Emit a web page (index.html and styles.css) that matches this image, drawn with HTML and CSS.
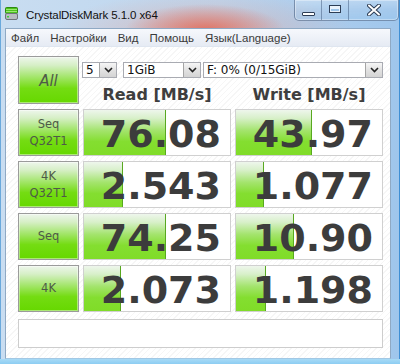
FILE: index.html
```html
<!DOCTYPE html>
<html>
<head>
<meta charset="utf-8">
<link rel="stylesheet" href="styles.css">
</head>
<body>
<div class="window">
  <div class="titlebar">
    <svg class="app-icon" width="13" height="13" viewBox="0 0 13 13">
      <rect x="0.5" y="0.5" width="12" height="6" rx="1" fill="#4cc21c" stroke="#2e8a10"/>
      <rect x="1" y="2" width="11" height="1" fill="#9ae870"/>
      <rect x="1" y="4" width="11" height="1" fill="#9ae870"/>
      <rect x="0.5" y="6.5" width="12" height="6" rx="1.5" fill="#b8bcc0" stroke="#6e7378"/>
      <rect x="2" y="9" width="2" height="1.5" fill="#3fd03a"/>
    </svg>
    <span class="title">CrystalDiskMark 5.1.0 x64</span>
    <div class="caption-btns">
      <div class="cbtn"><span class="min-glyph"></span></div>
      <div class="cbtn"><span class="max-glyph"></span></div>
      <div class="cbtn close">
        <svg width="14" height="12" viewBox="0 0 14 12">
          <path d="M2 1.5 L12 10.5 M12 1.5 L2 10.5" stroke="#2d3d55" stroke-width="4" stroke-linecap="round"/>
          <path d="M2 1.5 L12 10.5 M12 1.5 L2 10.5" stroke="#ffffff" stroke-width="2" stroke-linecap="round"/>
        </svg>
      </div>
    </div>
  </div>
  <div class="client">
    <div class="menubar">
      <span>Файл</span>
      <span>Настройки</span>
      <span>Вид</span>
      <span>Помощь</span>
      <span>Язык(Language)</span>
    </div>
    <div class="main">
      <div class="grid">
        <div class="btn all">All</div>
        <div class="top">
          <div class="combos">
            <div class="combo c-count"><span class="val">5</span><span class="drop"><svg width="9" height="6" viewBox="0 0 9 6"><path d="M1 1 L4.5 4.5 L8 1" fill="none" stroke="#222" stroke-width="1.6"/></svg></span></div>
            <div class="combo c-size"><span class="val">1GiB</span><span class="drop"><svg width="9" height="6" viewBox="0 0 9 6"><path d="M1 1 L4.5 4.5 L8 1" fill="none" stroke="#222" stroke-width="1.6"/></svg></span></div>
            <div class="combo c-drive"><span class="val">F: 0% (0/15GiB)</span><span class="drop"><svg width="9" height="6" viewBox="0 0 9 6"><path d="M1 1 L4.5 4.5 L8 1" fill="none" stroke="#222" stroke-width="1.6"/></svg></span></div>
          </div>
          <div class="heads">
            <div class="head">Read [MB/s]</div>
            <div class="head">Write [MB/s]</div>
          </div>
        </div>

        <div class="btn label"><span>Seq</span><span>Q32T1</span></div>
        <div class="val-box" style="--w:82px">76.08</div>
        <div class="val-box" style="--w:76px">43.97</div>

        <div class="btn label"><span>4K</span><span>Q32T1</span></div>
        <div class="val-box" style="--w:39px">2.543</div>
        <div class="val-box" style="--w:28px">1.077</div>

        <div class="btn label"><span>Seq</span></div>
        <div class="val-box" style="--w:82px">74.25</div>
        <div class="val-box" style="--w:58px">10.90</div>

        <div class="btn label"><span>4K</span></div>
        <div class="val-box" style="--w:37px">2.073</div>
        <div class="val-box" style="--w:30px">1.198</div>
      </div>
      <div class="status"></div>
    </div>
  </div>
</div>
</body>
</html>
```

FILE: styles.css
```css
html, body {
  margin: 0;
  padding: 0;
}
body {
  width: 400px;
  height: 364px;
  overflow: hidden;
  background: #a6d2f2;
}
.window {
  box-sizing: border-box;
  width: 400px;
  height: 364px;
  padding: 0 9px 5px 5px;
  display: flex;
  flex-direction: column;
  background:
    radial-gradient(ellipse 80px 26px at 205px 30px, rgba(226, 104, 86, 0.85), rgba(226, 120, 96, 0) 100%),
    radial-gradient(ellipse 150px 40px at 205px 32px, rgba(236, 150, 130, 0.45), rgba(236, 150, 130, 0) 100%),
    linear-gradient(to right, #c9ddf1 0%, #bcd5ee 55%, #9fc6ec 100%);
  box-shadow: inset 1px 0 0 #6aa9dc, inset -1px 0 0 #3f8fd4, inset 0 -1px 0 #5aa2dc;
  position: relative;
}
.window::after {
  content: "";
  position: absolute;
  left: 0;
  right: 0;
  bottom: 0;
  height: 5px;
  background: linear-gradient(to bottom, #a8daf6, #8ccdf2);
  z-index: 0;
}
.titlebar {
  height: 28px;
  display: flex;
  align-items: flex-start;
  flex-shrink: 0;
  margin-right: -9px;
}
.app-icon {
  margin-top: 7px;
  margin-left: 0;
  flex-shrink: 0;
}
.title {
  margin-left: 8px;
  margin-top: 8px;
  font-family: "Liberation Sans", Arial, sans-serif;
  font-size: 11.5px;
  line-height: 14px;
  color: #101010;
  letter-spacing: -0.1px;
}
.caption-btns {
  margin-left: auto;
  margin-right: 1px;
  display: flex;
  height: 20px;
  border: 1px solid rgba(50, 75, 110, 0.5);
  border-top: none;
  border-radius: 0 0 5px 5px;
  overflow: hidden;
  background: linear-gradient(to bottom, rgba(255,255,255,0.25), rgba(255,255,255,0.05) 50%, rgba(150,200,240,0.3));
  box-shadow: inset 0 0 0 1px rgba(255,255,255,0.35);
}
.cbtn {
  width: 26px;
  display: flex;
  align-items: center;
  justify-content: center;
  border-right: 1px solid rgba(50, 75, 110, 0.45);
}
.cbtn.close {
  width: 49px;
  border-right: none;
}
.min-glyph {
  width: 11px;
  height: 2px;
  margin-top: 7px;
  background: #fff;
  border: 1px solid #2d3d55;
  border-radius: 1px;
}
.max-glyph {
  width: 10px;
  height: 6px;
  border: 1px solid #2d3d55;
  box-shadow: inset 0 0 0 1px #eaf3fc, inset 0 2px 0 1px #eaf3fc;
  background: #9cc4ea;
  margin-top: -2px;
}
.close svg {
  margin-top: -1px;
}
.client {
  flex: 1;
  border: 1px solid #8fa9c4;
  border-bottom-color: #a3c8e4;
  display: flex;
  flex-direction: column;
  background: repeating-linear-gradient(135deg, #ffffff 0 3px, #f6f6f6 3px 4px);
  position: relative;
  z-index: 1;
  margin-bottom: 0;
}
.menubar {
  height: 17px;
  display: flex;
  align-items: center;
  gap: 11px;
  padding-left: 5px;
  background: linear-gradient(to bottom, #f6f8fc, #e6ebf4);
  border-bottom: 1px solid #dfe6f0;
  font-family: "Liberation Sans", Arial, sans-serif;
  font-size: 11.5px;
  color: #3a3a3a;
}
.main {
  flex: 1;
  padding: 9px 7px 0 12px;
  display: flex;
  flex-direction: column;
}
.grid {
  display: grid;
  grid-template-columns: 61px 148px 148px;
  grid-template-rows: 48px 47px 47px 47px 47px;
  column-gap: 4px;
  row-gap: 5px;
}
.grid > :nth-child(n+3) {
  margin-top: 0;
}
.btn {
  box-sizing: border-box;
  border: 1px solid #9b9b9b;
  background: linear-gradient(to bottom, #eef6ec 0%, #d6efc6 18%, #a6e670 42%, #74dc12 68%, #66d800 100%);
  box-shadow: inset 0 0 0 1px rgba(255, 255, 255, 0.45);
  display: flex;
  flex-direction: column;
  align-items: center;
  justify-content: center;
  color: #4e5a48;
}
.all {
  font-family: "DejaVu Sans", Verdana, sans-serif;
  font-size: 15px;
  font-style: italic;
  padding-top: 2px;
}
.label {
  font-family: "DejaVu Sans", Verdana, sans-serif;
  font-size: 11.5px;
  line-height: 17px;
}
.top {
  grid-column: 2 / 4;
  display: flex;
  flex-direction: column;
}
.combos {
  margin-top: 6px;
  margin-left: -1px;
  display: flex;
  height: 16px;
}
.combo {
  box-sizing: border-box;
  height: 16px;
  border: 1px solid #a9abb2;
  background: #fff;
  display: flex;
  align-items: center;
  font-family: "DejaVu Sans", Verdana, sans-serif;
  font-size: 12px;
  color: #111;
}
.combo .val {
  flex: 1;
  padding-left: 3px;
  line-height: 14px;
}
.c-count { width: 35px; }
.c-size { width: 78px; margin-left: 6px; }
.c-drive { width: 180px; margin-left: 2px; }
.drop {
  box-sizing: border-box;
  width: 17px;
  height: 14px;
  border-left: 1px solid #a5a5a5;
  background: linear-gradient(to bottom, #f6f6f6, #e2e2e2 50%, #d4d4d4);
  display: flex;
  align-items: center;
  justify-content: center;
}
.heads {
  margin-top: 7px;
  display: grid;
  grid-template-columns: 148px 148px;
  column-gap: 4px;
}
.head {
  text-align: center;
  font-family: "DejaVu Sans", Verdana, sans-serif;
  font-weight: bold;
  font-size: 16px;
  line-height: 19px;
  color: #3e3e3e;
}
.val-box {
  box-sizing: border-box;
  border: 1px solid #d0d0d0;
  background:
    linear-gradient(#58a820, #58a820) no-repeat calc(var(--w) - 1px) 0 / 1px 100%,
    linear-gradient(to bottom, #eef6ec 0%, #d8f0ca 18%, #a4e46e 45%, #84de30 70%, #80dc28 100%) no-repeat 0 0 / var(--w) 100%,
    #ffffff;
  display: flex;
  align-items: center;
  justify-content: flex-end;
  padding: 3px 9px 0 0;
  font-family: "DejaVu Sans", Verdana, sans-serif;
  font-weight: bold;
  font-size: 38px;
  color: #3c3c3c;
  line-height: 44px;
  letter-spacing: 0;
}
.status {
  box-sizing: border-box;
  margin-top: 7px;
  height: 29px;
  width: 365px;
  border: 1px solid #cdcdcd;
  background: #fff;
}
```
